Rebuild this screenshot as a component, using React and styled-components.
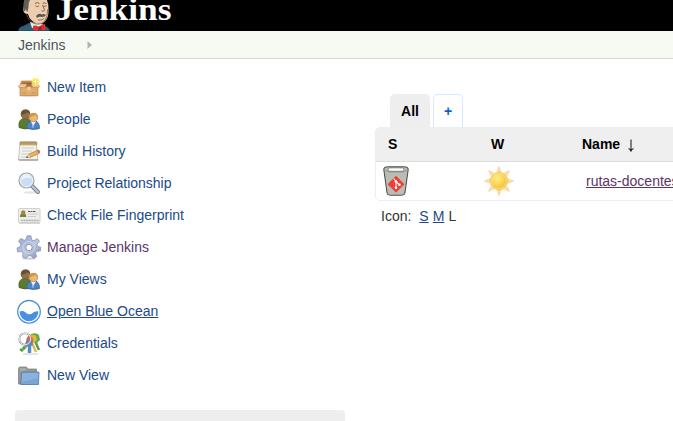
import React from "react";
import styled, { createGlobalStyle } from "styled-components";

const GlobalStyle = createGlobalStyle`
  * { box-sizing: border-box; }
  body {
    margin: 0;
    background: #fff;
    color: #333;
    font: 14px/16px "Liberation Sans", Arial, sans-serif;
    overflow: hidden;
  }
`;
const Page = styled.div`
  width: 673px;
  height: 421px;
  overflow: hidden;
  display: flex;
  flex-direction: column;
`;
const Header = styled.header`
  height: 31px;
  flex: none;
  background: #000;
  overflow: hidden;
  padding-left: 17px;
`;
const Logo = styled.svg`
  display: block;
`;
const Breadcrumbs = styled.nav`
  height: 28px;
  flex: none;
  display: flex;
  align-items: center;
  gap: 22px;
  padding: 0 0 0 18px;
  background: #f6faf2;
  border-bottom: 1px solid #d3d7cf;
  color: #4d545d;
`;
const Body = styled.div`
  display: flex;
  flex: 1;
  min-height: 0;
`;
const SidePanel = styled.aside`
  width: 345px;
  flex: none;
  padding: 12px 0 0 15px;
`;
const Task = styled.div`
  display: flex;
  align-items: center;
  height: 32px;
  padding-left: 2px;
  gap: 6px;
`;
const TaskIcon = styled.svg`
  width: 24px;
  height: 24px;
  flex: none;
  overflow: visible;
`;
const Link = styled.a`
  color: ${(p) => (p.$visited ? "#5c3566" : "#204a87")};
  text-decoration: ${(p) => (p.$underline ? "underline" : "none")};
  white-space: nowrap;
`;
const PaneHeader = styled.div`
  height: 30px;
  margin-top: 19px;
  border-radius: 4px 4px 0 0;
  background: #eee;
`;
const Main = styled.main`
  flex: 1;
  min-width: 0;
  padding: 35px 0 0 30px;
`;
const Tabs = styled.div`
  display: flex;
  gap: 3px;
  padding-left: 15px;
`;
const Tab = styled.div`
  width: ${(p) => (p.$active ? 40 : 30)}px;
  height: 33px;
  display: flex;
  align-items: center;
  justify-content: center;
  padding-bottom: ${(p) => (p.$active ? 1 : 0)}px;
  border: 1px solid ${(p) => (p.$active ? "#eee" : "#d5ebfc")};
  border-bottom: 0;
  border-radius: 5px 5px 0 0;
  background: ${(p) => (p.$active ? "#eee" : "#fff")};
  color: ${(p) => (p.$active ? "#000" : "#0b61cc")};
  font-weight: bold;
`;
const Table = styled.div`
  width: 420px;
  height: 74px;
  border: 1px solid #eee;
  border-radius: 5px;
  overflow: hidden;
`;
const Row = styled.div`
  display: grid;
  grid-template-columns: 104px 102px 1fr;
  align-items: center;
  height: ${(p) => (p.$head ? 34 : 38)}px;
  padding-bottom: ${(p) => (p.$head ? 1 : 0)}px;
  background: ${(p) => (p.$head ? "#efefef" : "#fff")};
  border-bottom: ${(p) => (p.$head ? "1px solid #dcdcdc" : "0")};
  color: #000;
  font-weight: ${(p) => (p.$head ? "bold" : "normal")};
`;
const Cell = styled.div`
  display: flex;
  align-items: center;
  gap: 7px;
  padding-left: ${(p) => p.$left}px;
`;
const Picture = styled.svg`
  display: block;
  flex: none;
  overflow: visible;
`;
const SortArrow = styled(Picture)`
  margin-top: 3px;
`;
const Sizes = styled.div`
  display: flex;
  gap: 4px;
  padding: 7px 0 0 6px;
`;
const SizesLabel = styled.span`
  margin-right: 4px;
`;

const Butler = () => (
  <Logo width="170" height="31" viewBox="17 0 170 31">
    <path d="M18.500 31q0-4 5-5l6-3 14 3q6 1 6 5z" fill="#335d74" stroke="#22404f" strokeWidth=".8" />
    <path d="M30 22l2 6 8 1 3-5z" fill="#e9e9e6" />
    <path d="M25 0h22q2 5 1.500 11 0 6-2.500 9-3 4.500-7 4-6-1-9.500-6l-1.500-4q-4 0-4.500-3-.5-4 1-5-1-3 .5-6z" fill="#ecceaf" />
    <path d="M24.500 0h5.500q-2 3-1.500 7l-1 5-1.500-3-2 2q-1.500-6 .5-11z" fill="#625f5b" />
    <path d="M24 11q2-2.500 3.500 0m-1 3q2 7 7.500 9.500 7 2 11-3 3-5 2.500-11" fill="none" stroke="#725541" strokeWidth=".8" />
    <path d="M35 3.500q2-2 4.500 0m3-.2q2-1.300 4 .4m-11 2.300q2 1 3.500 0m4.500 0q1.500.7 3-.1m-4-1l2 5q0 2-3 1m-3.500 9q4 .8 6-1.500" fill="none" stroke="#7c5b46" strokeWidth=".9" />
    <path d="M36 16q3-3.500 6-1.500 2-1 4 .5-1 2-4 2-3-1-5 1z" fill="#5e5751" />
    <path d="M33 26q3-1.500 6 1 3-3.500 6-3l1 6h-5l-2-1-2 2-4-1z" fill="#dc3035" />
    <path d="M38.500 26.500h3v3.500h-3z" fill="#9c1d26" />
    <text x="55.500" y="19.500" fill="#fff" fontFamily='"Liberation Serif", Georgia, serif' fontWeight="bold" fontSize="32.500" textLength="116" lengthAdjust="spacingAndGlyphs">Jenkins</text>
  </Logo>
);

const icons = {
  box: (
    <>
      <ellipse cx="12" cy="21" rx="10" ry="1.200" fill="#ddd" />
      <path d="M4.500 6h15L21.500 12H2.500z" fill="#ca9352" stroke="#b57b3b" strokeWidth=".6" />
      <path d="M5.500 7.500h12l2 3H4z" fill="#99662f" />
      <path d="M3 12h18v8.500H3z" fill="#dfac6c" stroke="#b98040" strokeWidth=".7" />
      <path d="M1 11.500L4 9h6l-2 3.500H2zM23 11.500L20 9h-6l2 3.500h6z" fill="#efc793" stroke="#c28d50" strokeWidth=".5" />
      <path d="M10.500 12h3v3.500h-3z" fill="#f2d1a1" />
      <path d="M5 18h4m6 0h4" stroke="#c8935a" />
      <circle cx="18.500" cy="6.500" r="4" fill="#fff177" opacity=".75" />
      <circle cx="18.500" cy="6.500" r="2.700" fill="#f7e346" />
      <path d="M18.500 4v5m-2.500-2.500h5" stroke="#fffce0" strokeWidth=".8" />
    </>
  ),
  people: (
    <>
      <path d="M2 20.500q-1-7.500 4-9h5q4 2 3 9-5 3-12 0z" fill="#5c7b30" stroke="#415a28" strokeWidth=".7" />
      <circle cx="8.500" cy="7.500" r="4.500" fill="#94704a" stroke="#6b5032" strokeWidth=".6" />
      <path d="M4 8Q3.500 2.500 8.500 2.500q5 0 4.500 5-1-2-3-2-3 2-6 2.500z" fill="#6b5132" />
      <path d="M10 21.500q-1-6.500 4-7.500h4.500q4 1 4 7.500-5 2-12.500 0z" fill="#4c84c2" stroke="#2e5d98" strokeWidth=".7" />
      <path d="M14 14l2 6 3-6z" fill="#fff" />
      <path d="M16 15l-1 5 1 1 1-1z" fill="#8ebae6" />
      <circle cx="16.500" cy="10.500" r="4.200" fill="#ecb878" stroke="#b57632" strokeWidth=".6" />
      <path d="M12.300 11q-1-5 4.200-5 5 0 4.200 5l-2.200-3q-3 1-6.200 3z" fill="#d69546" />
    </>
  ),
  note: (
    <>
      <path d="M3 4h16l2 17H1.500z" fill="#f3f3ed" stroke="#aaa" strokeWidth=".7" />
      <path d="M3 3h17v3H3z" fill="#d2b565" stroke="#98804a" strokeWidth=".5" />
      <path d="M4 2v3m2-3v3m2-3v3m2-3v3m2-3v3m2-3v3m2-3v3m2-3v3" stroke="#7d6849" strokeWidth=".6" />
      <path d="M5 9h12M5 12h10M4 15h8M4 18h7" stroke="#c2c2bf" strokeWidth=".8" />
      <path d="M10 18l2-3 9-4 2 1.500-1 2-9 4z" fill="#e9b35b" stroke="#a96d32" strokeWidth=".6" />
      <path d="M20 10.500l2.500 1 .5 2-2 .8z" fill="#d36655" />
      <path d="M9.500 18.200l2.500-3 1 3z" fill="#ead5ad" />
      <path d="M9 18.300l2-.2" stroke="#444" />
      <path d="M2 21h19" stroke="#888" />
    </>
  ),
  search: (
    <>
      <ellipse cx="14" cy="21.500" rx="8" ry="1.200" fill="#e4e4e0" />
      <path d="M15 15l6 6" stroke="#777a83" strokeWidth="4" strokeLinecap="round" />
      <path d="M15 15l6 6" stroke="#b8c4e0" strokeWidth="2.400" strokeLinecap="round" />
      <circle cx="9.500" cy="9.500" r="7.500" fill="#c5daf1" stroke="#a1a39f" strokeWidth="1.200" />
      <circle cx="9.500" cy="9.500" r="6.300" fill="#c9def4" stroke="#eef4fb" />
      <path d="M4.500 9.500q0-5 5-6 3 0 5 4-7-2-10 2z" fill="#e8f3fe" />
    </>
  ),
  card: (
    <>
      <path d="M2 20.500h21" stroke="#d6d6d6" />
      <rect x="1.500" y="5.500" width="21.500" height="14" rx="1" fill="#eeefec" stroke="#c6c8c3" strokeWidth=".8" />
      <path d="M3 14q0-4 3.300-4 3 0 3 4z" fill="#6b8738" />
      <circle cx="6.200" cy="9.500" r="2.200" fill="#b5803e" />
      <path d="M11 8.500h8" stroke="#555" strokeDasharray="2 .5" />
      <path d="M11 11h10M11 13.500h8" stroke="#bbb" strokeWidth=".7" />
      <path d="M4 17.700h18" stroke="#888" strokeWidth="1.300" strokeDasharray=".7 .9" />
      <path d="M4 17h17" stroke="#bbb" strokeWidth=".7" />
    </>
  ),
  gear: (
    <>
      <defs>
        <linearGradient id="gear" x2="1" y2="1"><stop stopColor="#92a4cc" /><stop offset=".55" stopColor="#bdc7df" /><stop offset="1" stopColor="#8090b1" /></linearGradient>
      </defs>
      <ellipse cx="12" cy="23.500" rx="7" ry="1" fill="#ccc" />
      <path d="M10 .8h4l.6 4 2.400 1 3.200-2.300 2.400 2.800L20 9.200l.8 2.300 3 .7-.4 3.800-3.500.2-1.500 2 1.300 3.200-3.300 2-2.400-2.700-2.700.2L9 23.300l-3.600-1.500.7-3.500-2-1.700-3.500.4L0 13l3.500-1.500.3-2.500L1.500 6.200 4 3.300l3.200 2 2-1z" fill="url(#gear)" stroke="#7f8fb6" strokeWidth=".7" />
      <circle cx="12" cy="12.500" r="6" fill="none" stroke="#d0d8ea" strokeWidth=".8" />
      <circle cx="12" cy="12.500" r="3.200" fill="#fff" stroke="#7f8fb6" strokeWidth=".9" />
    </>
  ),
  ocean: (
    <>
      <circle cx="12" cy="12.800" r="11.300" fill="#fff" stroke="#4a90e2" strokeWidth="1.300" />
      <path d="M2.600 12.500C5 11.300 7 12 9 13.700s4 2.200 6.500.5c2-1.400 3.800-2.200 5.900-1.700-.1 5.500-4.300 9.700-9.400 9.700s-9.300-4.200-9.400-9.700z" fill="#4a90e2" />
    </>
  ),
  keys: (
    <>
      <path d="M6 23h15" stroke="#ddd" strokeWidth="1.500" />
      <path d="M12 12l-8 8" stroke="#74b05c" strokeWidth="3" />
      <path d="M6 16l2 2m-5 0l2 2" stroke="#519b46" strokeWidth="1.800" />
      <path d="M12.500 12v10" stroke="#5688c4" strokeWidth="3.500" />
      <path d="M15 12l4 9" stroke="#dfbc45" strokeWidth="2.500" />
      <path d="M18 10l4 9" stroke="#579c53" strokeWidth="2.500" />
      <path d="M14 3q5-2 8 1l1 5-3 3-7-3z" fill="#64a857" />
      <path d="M13 4q4-1 6 1l1 4-4 3-4-3z" fill="#e0b637" />
      <path d="M11 5q4 0 5 3v4h-5l-2-3z" fill="#dc604e" />
      <path d="M9 10h6l1 4-4 2-4-2z" fill="#548bcc" />
      <circle cx="8" cy="8" r="5.700" fill="none" stroke="#8b8d8b" strokeWidth="1.800" />
      <circle cx="8" cy="8" r="5.700" fill="none" stroke="#f1f1f1" strokeWidth=".9" />
    </>
  ),
  folder: (
    <>
      <path d="M1.500 21V5.500L2.500 4h7l1 2h9v15z" fill="#969a95" stroke="#777b75" strokeWidth=".7" />
      <path d="M3 5h6v3H3z" fill="#a8aca6" />
      <path d="M4.500 9.500L5 9h17l-.5 12.500h-18z" fill="#79a5d3" stroke="#4c7bb0" strokeWidth=".8" />
      <path d="M5.200 10h16l-.4 5-16 4z" fill="#97b9de" opacity=".65" />
    </>
  ),
};

const tasks = [
  ["New Item", "box"],
  ["People", "people"],
  ["Build History", "note"],
  ["Project Relationship", "search"],
  ["Check File Fingerprint", "card"],
  ["Manage Jenkins", "gear", true],
  ["My Views", "people"],
  ["Open Blue Ocean", "ocean", false, true],
  ["Credentials", "keys"],
  ["New View", "folder"],
];

const Bucket = () => (
  <Picture width="26" height="30" viewBox="0 0 26 30">
    <path d="M.8 3.500Q1 .7 5 .7h16q4 0 4.200 2.800L22 26.500q-.5 2.800-4 2.800H8q-3.500 0-4-2.800z" fill="#babdb6" stroke="#4f534f" strokeWidth="1.100" />
    <rect x="5" y="1.800" width="16" height="3.500" rx="1.700" fill="#fff" stroke="#626662" strokeWidth=".8" />
    <path d="M1.500 4l3.500 2h16l3.500-2" fill="none" stroke="#888c87" strokeWidth=".7" />
    <rect x="7" y="12.200" width="12" height="12" rx=".8" transform="rotate(45 13 18.200)" fill="#ef3e36" />
    <path d="M10.500 12.500l2.500 3V22m0-6.500l3.500 3.500" fill="none" stroke="#fff" strokeWidth="1.100" />
    <circle cx="13" cy="15.500" r="1.300" fill="#fff" />
    <circle cx="13" cy="21.700" r="1.300" fill="#fff" />
    <circle cx="16.500" cy="18.800" r="1.300" fill="#fff" />
  </Picture>
);

const Sun = () => (
  <Picture width="30" height="30" viewBox="0 0 30 30">
    <defs>
      <radialGradient id="sun" cx=".4" cy=".35"><stop stopColor="#ffe88c" /><stop offset=".65" stopColor="#fbd855" /><stop offset="1" stopColor="#f5c54b" /></radialGradient>
    </defs>
    {[0, 45, 90, 135, 180, 225, 270, 315].map((angle) => (
      <path key={angle} d="M15 .5l2 5h-4z" transform={`rotate(${angle} 15 15)`} fill="#fce3ac" stroke="#f3c87f" strokeWidth=".6" />
    ))}
    <circle cx="15" cy="15" r="8.700" fill="url(#sun)" stroke="#f2bd57" strokeWidth=".8" />
    <circle cx="15" cy="15" r="7.700" fill="none" stroke="#fce389" strokeWidth=".8" />
  </Picture>
);

export default function App() {
  return (
    <Page>
      <GlobalStyle />
      <Header><Butler /></Header>
      <Breadcrumbs>
        <span>Jenkins</span>
        <Picture width="5" height="8" viewBox="0 0 5 8"><path d="M.5 0L5 4 .5 8z" fill="#b3b6b0" /></Picture>
      </Breadcrumbs>
      <Body>
        <SidePanel>
          {tasks.map(([label, icon, visited, underline]) => (
            <Task key={label}>
              <TaskIcon viewBox="0 0 24 24">{icons[icon]}</TaskIcon>
              <Link $visited={visited} $underline={underline}>{label}</Link>
            </Task>
          ))}
          <PaneHeader />
        </SidePanel>
        <Main>
          <Tabs>
            <Tab $active>All</Tab>
            <Tab>+</Tab>
          </Tabs>
          <Table>
            <Row $head>
              <Cell $left={12}>S</Cell>
              <Cell $left={11}>W</Cell>
              <Cell $left={0}>
                Name
                <SortArrow width="8" height="13" viewBox="0 0 8 13"><path d="M4 .5v11.500M1.500 9.500q1.500.5 2.500 2.500 1-2 2.500-2.500" fill="none" stroke="#222" strokeWidth="1.100" /></SortArrow>
              </Cell>
            </Row>
            <Row>
              <Cell $left={7}><Bucket /></Cell>
              <Cell $left={4}><Sun /></Cell>
              <Cell $left={4}><Link $visited $underline>rutas-docentes</Link></Cell>
            </Row>
          </Table>
          <Sizes>
            <SizesLabel>Icon:</SizesLabel>
            <Link $underline>S</Link>
            <Link $underline>M</Link>
            <span>L</span>
          </Sizes>
        </Main>
      </Body>
    </Page>
  );
}
